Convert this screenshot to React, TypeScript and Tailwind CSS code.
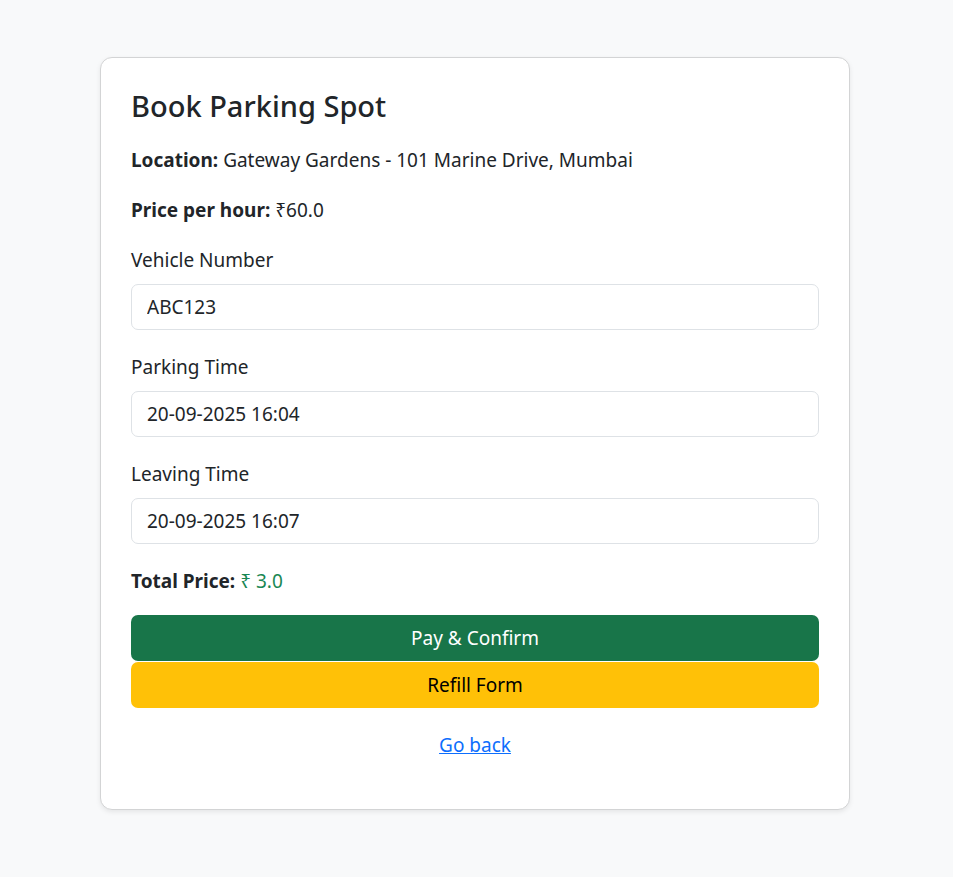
import React from "react";

const Field = ({ label, value }: { label: string; value: string }) => (
  <div className="mb-[23px]">
    <label className="block mb-[9px] leading-[29px]">{label}</label>
    <input
      readOnly
      value={value}
      className="block w-full h-[46px] px-[15px] border border-[#dee2e6] rounded-[7px] bg-white text-[#212529] text-[19px] outline-none"
    />
  </div>
);

export default function App() {
  return (
    <div
      className="min-h-[877px] bg-[#f8f9fa] flex justify-center pt-[57px] pr-[3px] text-[#212529] text-[19px]"
      style={{ fontFamily: '"Noto Sans", "Open Sans", sans-serif' }}
    >
      <div className="w-[750px] h-fit bg-white border border-[#d3d4d5] rounded-[12px] shadow-[0_2px_5px_rgba(0,0,0,0.08)] px-[30px] pt-[29px] pb-[30px]">
        <h3 className="text-[29px] font-medium leading-[37px] mb-[22px]">Book Parking Spot</h3>

        <p className="leading-[29px] mb-[21px]">
          <span className="font-bold">Location:</span> Gateway Gardens - 101 Marine Drive, Mumbai
        </p>
        <p className="leading-[29px] mb-[21px]">
          <span className="font-bold">Price per hour:</span> ₹60.0
        </p>

        <Field label="Vehicle Number" value="ABC123" />
        <Field label="Parking Time" value="20-09-2025 16:04" />
        <Field label="Leaving Time" value="20-09-2025 16:07" />

        <p className="leading-[29px] mb-[19px]">
          <span className="font-bold">Total Price:</span>{" "}
          <span className="text-[#198754]">₹ 3.0</span>
        </p>

        <div className="flex flex-col">
          <button className="h-[46px] w-full rounded-[7px] bg-[#187549] text-white text-[19px]">
            Pay &amp; Confirm
          </button>
          <button className="h-[46px] w-full rounded-[7px] bg-[#ffc107] text-black text-[19px] mt-[1px]">
            Refill Form
          </button>
        </div>

        <p className="text-center leading-[29px] mt-[23px] mb-[19px]">
          <a href="#" className="text-[#0d6efd] underline">
            Go back
          </a>
        </p>
      </div>
    </div>
  );
}
